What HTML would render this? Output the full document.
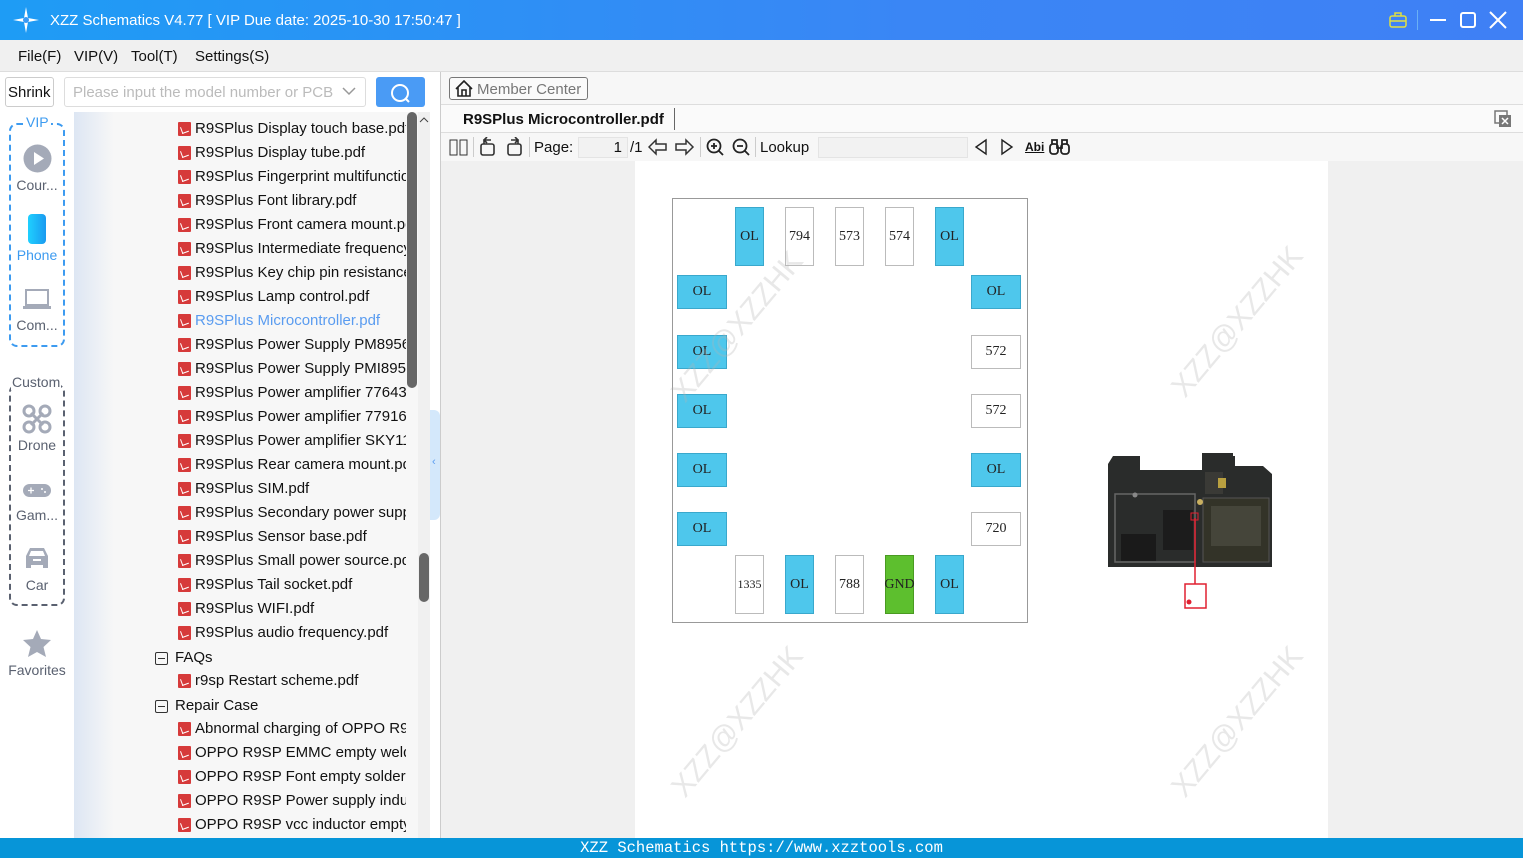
<!DOCTYPE html>
<html><head><meta charset="utf-8">
<style>
*{margin:0;padding:0;box-sizing:border-box}
body{width:1523px;height:858px;overflow:hidden;position:relative;font-family:"Liberation Sans",sans-serif;background:#f0f0f0;color:#111}
.abs{position:absolute}
.title{left:0;top:0;width:1523px;height:40px;background:linear-gradient(90deg,#1e9cf5,#3a86f5 60%,#3f80f5);color:#fff;font-size:15px}
.menu{left:0;top:40px;width:1523px;height:32px;background:#f0f0f0;font-size:15px;border-bottom:1px solid #ddd}
.menu span{position:absolute;top:8px}
.tree{left:74px;top:112px;width:344px;height:726px;background:linear-gradient(90deg,#dde6f3,#f7f7f7 40px);overflow:hidden}
.row{position:absolute;height:24px;font-size:15px;white-space:nowrap;overflow:hidden;width:228px;left:104px}
.row i{position:absolute;left:0;top:6px;width:13px;height:14px;background:#d63a3a;border-radius:1px}
.row i:after{content:"";position:absolute;left:3px;top:4px;width:6px;height:6px;border-left:1.5px solid #fff;border-bottom:1.5px solid #fff;transform:rotate(-20deg)}
.row b{font-weight:normal;position:absolute;left:17px;top:4px}
.fold{position:absolute;left:81px;font-size:15px}
.fold i{position:absolute;left:0;top:5px;width:13px;height:13px;border:1px solid #333;border-radius:2px}
.fold i:after{content:"";position:absolute;left:2px;top:5px;width:7px;height:1px;background:#333}
.fold b{font-weight:normal;position:absolute;left:20px;top:2px;white-space:nowrap}
.side{left:0;top:112px;width:74px;height:726px;background:#fff;font-size:14px;color:#5a6170;text-align:center}
.pad{position:absolute;font-family:"Liberation Serif",serif;font-size:14px;color:#222;display:flex;align-items:center;justify-content:center;border:1px solid #bbb;background:#fff}
.c{background:#4ec7ec;border-color:#3aa8cc}
.wm{position:absolute;color:rgba(180,180,180,.3);font-size:30px;transform:rotate(-50deg);white-space:nowrap}
.tb{font-size:15px;position:absolute;top:139px}
</style></head><body>
<div class="abs title">
 <svg class="abs" style="left:13px;top:7px" width="26" height="26" viewBox="0 0 26 26"><path d="M13 0 L15 11 L26 13 L15 15 L13 26 L11 15 L0 13 L11 11Z" fill="#fff"/><circle cx="13" cy="13" r="3" fill="#3a9af5"/></svg>
 <span class="abs" style="left:50px;top:12px">XZZ Schematics V4.77 [ VIP Due date: 2025-10-30 17:50:47 ]</span>
 <svg class="abs" style="left:1388px;top:11px" width="20" height="18"><rect x="2" y="5" width="16" height="11" rx="2" fill="none" stroke="#e0e040" stroke-width="1.5"/><path d="M7 5V2h6v3M2 10h16" stroke="#e0e040" stroke-width="1.5" fill="none"/></svg>
 <div class="abs" style="left:1417px;top:10px;width:1px;height:20px;background:#6ab0f5"></div>
 <div class="abs" style="left:1430px;top:19px;width:16px;height:2px;background:#fff"></div>
 <div class="abs" style="left:1460px;top:12px;width:16px;height:16px;border:2px solid #fff;border-radius:3px"></div>
 <svg class="abs" style="left:1489px;top:11px" width="18" height="18"><path d="M1 1L17 17M17 1L1 17" stroke="#fff" stroke-width="2"/></svg>
</div>
<div class="abs menu"><span style="left:18px">File(F)</span><span style="left:74px">VIP(V)</span><span style="left:131px">Tool(T)</span><span style="left:195px">Settings(S)</span></div>
<div class="abs" style="left:0;top:72px;width:440px;height:40px;background:#fff"></div>
<div class="abs" style="left:5px;top:77px;width:49px;height:30px;border:1px solid #ccc;border-radius:3px;font-size:15px;padding:6px 2px;background:#fff">Shrink</div>
<div class="abs" style="left:64px;top:77px;width:302px;height:30px;border:1px solid #ddd;border-radius:3px;font-size:15px;color:#bbb;padding:6px 8px;background:#fff">Please input the model number or PCB</div>
<svg class="abs" style="left:342px;top:87px" width="14" height="9"><path d="M1 1L7 7L13 1" stroke="#999" stroke-width="1.5" fill="none"/></svg>
<div class="abs" style="left:376px;top:77px;width:49px;height:30px;background:#4a9bf5;border-radius:3px"></div>
<svg class="abs" style="left:389px;top:82px" width="24" height="22"><circle cx="11" cy="11" r="8" stroke="#fff" stroke-width="2" fill="none"/><path d="M16 16L20 20" stroke="#fff" stroke-width="2"/></svg>
<div class="abs side">
 <div class="abs" style="left:9px;top:11px;width:56px;height:224px;border:2px dashed #3d9bf0;border-radius:8px"></div>
 <div class="abs" style="left:24px;top:2px;background:#fff;color:#3d9bf0;padding:0 2px">VIP</div>
 <svg class="abs" style="left:23px;top:32px" width="29" height="29"><circle cx="14.5" cy="14.5" r="14" fill="#a4aab8"/><path d="M11 8L21 14.5L11 21Z" fill="#fff"/></svg>
 <div class="abs" style="left:0;width:74px;top:65px">Cour...</div>
 <div class="abs" style="left:28px;top:102px;width:18px;height:30px;border-radius:4px;background:linear-gradient(90deg,#1fd0ff,#1a9af0)"></div>
 <div class="abs" style="left:0;width:74px;top:135px;color:#3d9bf0">Phone</div>
 <svg class="abs" style="left:22px;top:176px" width="30" height="22"><rect x="4" y="2" width="22" height="15" fill="none" stroke="#a4aab8" stroke-width="2"/><rect x="1" y="18" width="28" height="3" fill="#a4aab8"/></svg>
 <div class="abs" style="left:0;width:74px;top:205px">Com...</div>
 <div class="abs" style="left:9px;top:272px;width:56px;height:222px;border:2px dashed #5a6170;border-radius:8px"></div>
 <div class="abs" style="left:11px;top:262px;background:#fff;padding:0 1px">Custom</div>
 <svg class="abs" style="left:22px;top:292px" width="30" height="30"><g fill="none" stroke="#a4aab8" stroke-width="3"><circle cx="7" cy="7" r="5"/><circle cx="23" cy="7" r="5"/><circle cx="7" cy="23" r="5"/><circle cx="23" cy="23" r="5"/><path d="M9 9L21 21M21 9L9 21"/></g></svg>
 <div class="abs" style="left:0;width:74px;top:325px">Drone</div>
 <svg class="abs" style="left:23px;top:372px" width="28" height="13"><rect width="28" height="13" rx="6.5" fill="#a4aab8"/><path d="M5 6.5H11M8 3.5V9.5" stroke="#fff" stroke-width="1.3"/><circle cx="19" cy="5" r="1" fill="#fff"/><circle cx="22" cy="8" r="1" fill="#fff"/></svg>
 <div class="abs" style="left:0;width:74px;top:395px">Gam...</div>
 <svg class="abs" style="left:23px;top:434px" width="28" height="24"><path d="M3 10L7 2H21L25 10V22H20V19H8V22H3Z" fill="#a4aab8"/><path d="M8 5h12l2 5H6z" fill="#fff"/><rect x="10" y="13" width="8" height="2" fill="#fff"/></svg>
 <div class="abs" style="left:0;width:74px;top:465px">Car</div>
 <svg class="abs" style="left:22px;top:517px" width="30" height="29"><path d="M15 1L19 10L29 11L21.5 18L24 28L15 23L6 28L8.5 18L1 11L11 10Z" fill="#a4aab8"/></svg>
 <div class="abs" style="left:0;width:74px;top:550px">Favorites</div>
</div>
<div class="abs tree">
 <div class="row" style="top:4px"><i></i><b>R9SPlus Display touch base.pdf</b></div>
 <div class="row" style="top:28px"><i></i><b>R9SPlus Display tube.pdf</b></div>
 <div class="row" style="top:52px"><i></i><b>R9SPlus Fingerprint multifunction.pdf</b></div>
 <div class="row" style="top:76px"><i></i><b>R9SPlus Font library.pdf</b></div>
 <div class="row" style="top:100px"><i></i><b>R9SPlus Front camera mount.pdf</b></div>
 <div class="row" style="top:124px"><i></i><b>R9SPlus Intermediate frequency.pdf</b></div>
 <div class="row" style="top:148px"><i></i><b>R9SPlus Key chip pin resistance.pdf</b></div>
 <div class="row" style="top:172px"><i></i><b>R9SPlus Lamp control.pdf</b></div>
 <div class="row" style="top:196px"><i></i><b style="color:#5a9cf0">R9SPlus Microcontroller.pdf</b></div>
 <div class="row" style="top:220px"><i></i><b>R9SPlus Power Supply PM8956.pdf</b></div>
 <div class="row" style="top:244px"><i></i><b>R9SPlus Power Supply PMI8952.pdf</b></div>
 <div class="row" style="top:268px"><i></i><b>R9SPlus Power amplifier 77643-11.pdf</b></div>
 <div class="row" style="top:292px"><i></i><b>R9SPlus Power amplifier 77916-11.pdf</b></div>
 <div class="row" style="top:316px"><i></i><b>R9SPlus Power amplifier SKY11.pdf</b></div>
 <div class="row" style="top:340px"><i></i><b>R9SPlus Rear camera mount.pdf</b></div>
 <div class="row" style="top:364px"><i></i><b>R9SPlus SIM.pdf</b></div>
 <div class="row" style="top:388px"><i></i><b>R9SPlus Secondary power supply.pdf</b></div>
 <div class="row" style="top:412px"><i></i><b>R9SPlus Sensor base.pdf</b></div>
 <div class="row" style="top:436px"><i></i><b>R9SPlus Small power source.pdf</b></div>
 <div class="row" style="top:460px"><i></i><b>R9SPlus Tail socket.pdf</b></div>
 <div class="row" style="top:484px"><i></i><b>R9SPlus WIFI.pdf</b></div>
 <div class="row" style="top:508px"><i></i><b>R9SPlus audio frequency.pdf</b></div>
 <div class="fold" style="top:535px"><i></i><b>FAQs</b></div>
 <div class="row" style="top:556px"><i></i><b>r9sp Restart scheme.pdf</b></div>
 <div class="fold" style="top:583px"><i></i><b>Repair Case</b></div>
 <div class="row" style="top:604px"><i></i><b>Abnormal charging of OPPO R9SP.pdf</b></div>
 <div class="row" style="top:628px"><i></i><b>OPPO R9SP EMMC empty weld.pdf</b></div>
 <div class="row" style="top:652px"><i></i><b>OPPO R9SP Font empty soldering.pdf</b></div>
 <div class="row" style="top:676px"><i></i><b>OPPO R9SP Power supply inductor.pdf</b></div>
 <div class="row" style="top:700px"><i></i><b>OPPO R9SP vcc inductor empty.pdf</b></div>
 <div class="abs" style="left:333px;top:0;width:10px;height:276px;background:#666;border-radius:5px"></div>
</div>
<div class="abs" style="left:418px;top:112px;width:12px;height:726px;background:#f0f0f0"></div>
<svg class="abs" style="left:419px;top:116px" width="10" height="7"><path d="M1 6L5 2L9 6" stroke="#444" fill="none"/></svg>
<div class="abs" style="left:419px;top:553px;width:10px;height:49px;background:#666;border-radius:5px"></div>
<div class="abs" style="left:430px;top:72px;width:10px;height:766px;background:#fff"></div>
<div class="abs" style="left:430px;top:410px;width:10px;height:110px;background:#d4e8fb;border-radius:0 6px 6px 0"></div>
<div class="abs" style="left:432px;top:456px;font-size:11px;color:#5a9cf0">‹</div>
<div class="abs" style="left:440px;top:72px;width:1px;height:766px;background:#ccc"></div>
<div class="abs" style="left:441px;top:72px;width:1082px;height:33px;background:#f7f7f7;border-bottom:1px solid #ddd"></div>
<div class="abs" style="left:449px;top:77px;width:139px;height:23px;border:1px solid #777;border-radius:3px;font-size:15px;color:#777;padding:3px 0 0 27px;background:#fafafa">Member Center</div>
<svg class="abs" style="left:455px;top:80px" width="18" height="17"><path d="M1 9L9 1L17 9M3 7V16H15V7M7 16V10H11V16" stroke="#222" stroke-width="1.6" fill="none"/></svg>
<div class="abs" style="left:441px;top:105px;width:1082px;height:28px;background:#fafafa;border-bottom:1px solid #ddd"></div>
<div class="abs" style="left:463px;top:111px;font-size:15px;font-weight:bold">R9SPlus Microcontroller.pdf</div>
<div class="abs" style="left:674px;top:108px;width:1px;height:22px;background:#666"></div>
<svg class="abs" style="left:1494px;top:110px" width="18" height="18"><rect x="1" y="1" width="12" height="12" fill="none" stroke="#777" stroke-width="1.5"/><rect x="5" y="5" width="12" height="12" fill="#777"/><path d="M8 8L14 14M14 8L8 14" stroke="#fff" stroke-width="1.5"/></svg>
<div class="abs" style="left:441px;top:133px;width:1082px;height:28px;background:#f7f7f7"></div>
<svg class="abs" style="left:449px;top:139px" width="20" height="17"><rect x="1" y="1" width="7" height="15" fill="none" stroke="#333"/><rect x="11" y="1" width="7" height="15" fill="none" stroke="#333"/></svg>
<div class="abs" style="left:473px;top:137px;width:1px;height:20px;background:#ccc"></div>
<svg class="abs" style="left:478px;top:137px" width="60" height="20"><g stroke="#333" stroke-width="1.6" fill="none"><rect x="3" y="7" width="13" height="11" rx="2"/><path d="M6 7V3H13M9 0L6 3L9 6"/><rect x="30" y="7" width="13" height="11" rx="2"/><path d="M40 7V3H33M37 0L40 3L37 6"/></g></svg>
<div class="abs" style="left:529px;top:137px;width:1px;height:20px;background:#ccc"></div>
<span class="tb" style="left:534px">Page:</span>
<div class="abs" style="left:578px;top:137px;width:50px;height:21px;background:#f2f2f2;border:1px solid #e4e4e4;font-size:15px;text-align:right;padding:1px 5px">1</div>
<span class="tb" style="left:630px">/1</span>
<svg class="abs" style="left:648px;top:138px" width="50" height="18"><g stroke="#333" stroke-width="1.5" fill="none"><path d="M1 9L8 2V6H18V12H8V16Z"/><path d="M45 9L38 2V6H28V12H38V16Z"/></g></svg>
<div class="abs" style="left:700px;top:137px;width:1px;height:20px;background:#ccc"></div>
<svg class="abs" style="left:705px;top:137px" width="48" height="20"><g stroke="#222" stroke-width="1.8" fill="none"><circle cx="9" cy="9" r="6.5"/><path d="M14 14L18 18M6 9H12M9 6V12"/><circle cx="35" cy="9" r="6.5"/><path d="M40 14L44 18M32 9H38"/></g></svg>
<div class="abs" style="left:755px;top:137px;width:1px;height:20px;background:#ccc"></div>
<span class="tb" style="left:760px">Lookup</span>
<div class="abs" style="left:818px;top:137px;width:150px;height:21px;background:#f2f2f2;border:1px solid #e4e4e4"></div>
<svg class="abs" style="left:973px;top:138px" width="46" height="18"><g stroke="#222" stroke-width="1.4" fill="none"><path d="M13 2L3 9L13 16Z"/><path d="M29 2L39 9L29 16Z"/></g></svg>
<div class="abs" style="left:1025px;top:140px;font-size:12px;font-weight:bold;text-decoration:underline">Abi</div>
<svg class="abs" style="left:1049px;top:138px" width="22" height="18"><g stroke="#222" stroke-width="1.8" fill="none"><rect x="1" y="6" width="8" height="10" rx="3"/><rect x="12" y="6" width="8" height="10" rx="3"/><path d="M3 6V2H8V10H13V2H18V6"/></g></svg>
<div class="abs" style="left:635px;top:161px;width:693px;height:677px;background:#fff"></div>
<div class="abs" style="left:672px;top:198px;width:356px;height:425px;border:1.5px solid #999"></div>
<div class="pad c" style="left:735px;top:207px;width:29px;height:59px">OL</div>
<div class="pad" style="left:785px;top:207px;width:29px;height:59px">794</div>
<div class="pad" style="left:835px;top:207px;width:29px;height:59px">573</div>
<div class="pad" style="left:885px;top:207px;width:29px;height:59px">574</div>
<div class="pad c" style="left:935px;top:207px;width:29px;height:59px">OL</div>
<div class="pad c" style="left:677px;top:275px;width:50px;height:34px">OL</div>
<div class="pad c" style="left:677px;top:335px;width:50px;height:34px">OL</div>
<div class="pad c" style="left:677px;top:394px;width:50px;height:34px">OL</div>
<div class="pad c" style="left:677px;top:453px;width:50px;height:34px">OL</div>
<div class="pad c" style="left:677px;top:512px;width:50px;height:34px">OL</div>
<div class="pad c" style="left:971px;top:275px;width:50px;height:34px">OL</div>
<div class="pad" style="left:971px;top:335px;width:50px;height:34px">572</div>
<div class="pad" style="left:971px;top:394px;width:50px;height:34px">572</div>
<div class="pad c" style="left:971px;top:453px;width:50px;height:34px">OL</div>
<div class="pad" style="left:971px;top:512px;width:50px;height:34px">720</div>
<div class="pad" style="left:735px;top:555px;width:29px;height:59px;font-size:12px">1335</div>
<div class="pad c" style="left:785px;top:555px;width:29px;height:59px">OL</div>
<div class="pad" style="left:835px;top:555px;width:29px;height:59px">788</div>
<div class="pad" style="left:885px;top:555px;width:29px;height:59px;background:#5dbf2e;border-color:#4a9a22">GND</div>
<div class="pad c" style="left:935px;top:555px;width:29px;height:59px">OL</div>
<div class="wm" style="left:645px;top:310px">XZZ@XZZHK</div>
<div class="wm" style="left:1145px;top:305px">XZZ@XZZHK</div>
<div class="wm" style="left:645px;top:705px">XZZ@XZZHK</div>
<div class="wm" style="left:1145px;top:705px">XZZ@XZZHK</div>
<svg class="abs" style="left:1105px;top:450px" width="172" height="162">
 <path d="M3 14L8 6H35V20H97V3H128V6H130V16H158L167 24V117H3Z" fill="#2a2c2b"/>
 <rect x="10" y="44" width="80" height="68" fill="none" stroke="#666" stroke-width="1.5"/>
 <rect x="16" y="84" width="35" height="27" fill="#1a1a1a"/>
 <rect x="58" y="60" width="30" height="40" fill="#1c1c1c"/>
 <rect x="98" y="48" width="66" height="64" fill="#333328" stroke="#555"/>
 <rect x="106" y="56" width="50" height="40" fill="#45453a"/>
 <rect x="100" y="22" width="18" height="22" fill="#3a3a36"/>
 <rect x="113" y="28" width="8" height="10" fill="#b9a040"/>
 <circle cx="95" cy="52" r="3" fill="#c9b060"/>
 <circle cx="30" cy="45" r="2.5" fill="#888"/>
 <path d="M90 68V135" stroke="#e02030" stroke-width="1.5"/>
 <rect x="86" y="63" width="7" height="7" fill="none" stroke="#e02030"/>
 <rect x="80" y="134" width="21" height="24" fill="#fff" stroke="#e02030" stroke-width="1.5"/>
 <circle cx="84" cy="152" r="2.5" fill="#e02030"/>
</svg>
<div class="abs" style="left:0;top:838px;width:1523px;height:20px;background:#0795d8;color:#fff;font-family:'Liberation Mono',monospace;font-size:15.5px;text-align:center;padding-top:1px;padding-left:0">XZZ Schematics https://www.xzztools.com</div>
</body></html>
